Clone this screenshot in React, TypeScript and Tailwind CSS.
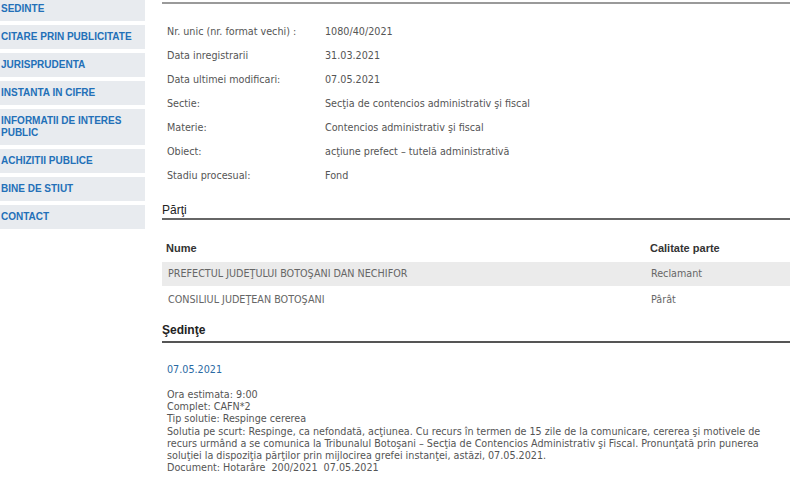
import React from "react";

const menu: string[][] = [
  ["SEDINTE"],
  ["CITARE PRIN PUBLICITATE"],
  ["JURISPRUDENTA"],
  ["INSTANTA IN CIFRE"],
  ["INFORMATII DE INTERES", "PUBLIC"],
  ["ACHIZITII PUBLICE"],
  ["BINE DE STIUT"],
  ["CONTACT"],
];

const info: [string, string][] = [
  ["Nr. unic (nr. format vechi) :", "1080/40/2021"],
  ["Data inregistrarii", "31.03.2021"],
  ["Data ultimei modificari:", "07.05.2021"],
  ["Sectie:", "Secţia de contencios administrativ şi fiscal"],
  ["Materie:", "Contencios administrativ şi fiscal"],
  ["Obiect:", "acţiune prefect – tutelă administrativă"],
  ["Stadiu procesual:", "Fond"],
];

const body = "font-['DejaVu_Sans_Condensed','DejaVu_Sans',sans-serif] font-stretch-condensed text-[10.7px]";

export default function App() {
  return (
    <div className="flex w-[800px] h-[483px] overflow-hidden bg-white">
      <div className="w-[145px] mt-[-3px] flex flex-col gap-[4px] shrink-0">
        {menu.map((m, i) => (
          <div
            key={i}
            className="bg-[#e8ebef] py-[6px] pl-[1px] font-['Liberation_Sans',Arial,sans-serif] font-bold text-[10px] leading-[12px] text-[#2370b8]"
          >
            {m.map((l, j) => (
              <div key={j}>{l}</div>
            ))}
          </div>
        ))}
      </div>
      <div className="ml-[17px] w-[628px] shrink-0 flex flex-col">
        <div className="mt-[2px] h-[2px] bg-[#9a9a9a]" />
        <div className={`mt-[16px] ${body} text-[#555]`}>
          {info.map(([k, v], i) => (
            <div key={i} className="flex h-[24px] items-center">
              <div className="w-[163px] pl-[5px]">{k}</div>
              <div>{v}</div>
            </div>
          ))}
        </div>
        <div className="mt-[15px] font-['Liberation_Sans',Arial,sans-serif] text-[12px] leading-[14px] text-[#222]">
          Părţi
        </div>
        <div className="mt-[1px] h-[2px] bg-[#666]" />
        <div className="mt-[16px] flex flex-col gap-[2px]">
          <div className="flex h-[24px] items-center font-['Liberation_Sans',Arial,sans-serif] font-bold text-[11px] text-[#333]">
            <div className="w-[488px] pl-[4px]">Nume</div>
            <div>Calitate parte</div>
          </div>
          <div className={`flex h-[24px] items-center bg-[#ebebeb] ${body} text-[#666]`}>
            <div className="w-[489px] pl-[6px]">PREFECTUL JUDEŢULUI BOTOŞANI DAN NECHIFOR</div>
            <div>Reclamant</div>
          </div>
          <div className={`flex h-[24px] items-center ${body} text-[#666]`}>
            <div className="w-[489px] pl-[6px]">CONSILIUL JUDEŢEAN BOTOŞANI</div>
            <div>Pârât</div>
          </div>
        </div>
        <div className="mt-[11px] font-['Liberation_Sans',Arial,sans-serif] font-bold text-[12px] leading-[14px] text-[#222]">
          Şedinţe
        </div>
        <div className="mt-[4px] h-[2px] bg-[#555]" />
        <div className={`mt-[21px] pl-[5px] ${body} leading-[12px] text-[#2a6aa3]`}>07.05.2021</div>
        <div className={`mt-[13px] pl-[5px] ${body} leading-[12.2px] text-[#555] whitespace-nowrap`}>
          <div>Ora estimata: 9:00</div>
          <div>Complet: CAFN*2</div>
          <div>Tip solutie: Respinge cererea</div>
          <div>
            Solutia pe scurt: Respinge, ca nefondată, acţiunea. Cu recurs în termen de 15 zile de la comunicare, cererea şi motivele de
          </div>
          <div>
            recurs urmând a se comunica la Tribunalul Botoşani – Secţia de Contencios Administrativ şi Fiscal. Pronunţată prin punerea
          </div>
          <div>soluţiei la dispoziţia părţilor prin mijlocirea grefei instanţei, astăzi, 07.05.2021.</div>
          <div>Document: Hotarâre&nbsp; 200/2021&nbsp; 07.05.2021</div>
        </div>
      </div>
    </div>
  );
}
